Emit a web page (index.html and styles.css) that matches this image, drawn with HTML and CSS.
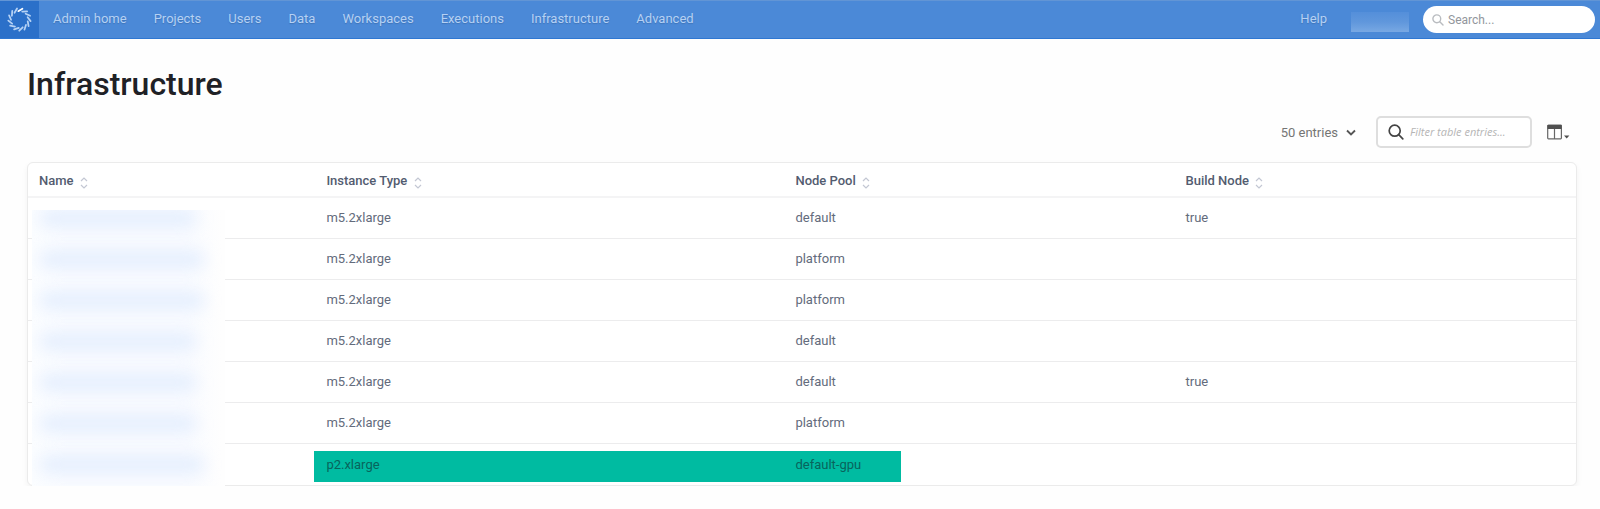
FILE: index.html
```html
<!DOCTYPE html>
<html lang="en">
<head>
<meta charset="utf-8">
<title>Infrastructure</title>
<link rel="stylesheet" href="styles.css">
</head>
<body>
<header class="topbar">
  <a class="logo" href="#" aria-label="Home">
    <svg width="25" height="25" viewBox="-12 -12 24 24" fill="none" stroke="#b5d2f5" stroke-width="1.7" stroke-linecap="round">
      <defs><path id="ray" d="M-1.2 -8 L2.8 -10.4"/></defs>
      <use href="#ray" stroke="#fff"/>
      <use href="#ray" transform="rotate(27.7)"/>
      <use href="#ray" transform="rotate(55.4)"/>
      <use href="#ray" transform="rotate(83.1)"/>
      <use href="#ray" transform="rotate(110.8)"/>
      <use href="#ray" transform="rotate(138.5)"/>
      <use href="#ray" transform="rotate(166.2)"/>
      <use href="#ray" transform="rotate(193.8)"/>
      <use href="#ray" transform="rotate(221.5)"/>
      <use href="#ray" transform="rotate(249.2)"/>
      <use href="#ray" transform="rotate(276.9)"/>
      <use href="#ray" transform="rotate(304.6)"/>
      <use href="#ray" transform="rotate(332.3)"/>
    </svg>
  </a>
  <nav class="nav">
    <a href="#">Admin home</a>
    <a href="#">Projects</a>
    <a href="#">Users</a>
    <a href="#">Data</a>
    <a href="#">Workspaces</a>
    <a href="#">Executions</a>
    <a href="#">Infrastructure</a>
    <a href="#">Advanced</a>
  </nav>
  <div class="tools">
    <a class="help" href="#">Help</a>
    <span class="user"></span>
    <label class="search">
      <svg width="12" height="12" viewBox="0 0 12 12" fill="none" stroke="#b9bcc0" stroke-width="1.4" stroke-linecap="round"><circle cx="4.8" cy="4.8" r="3.9"/><path d="M7.8 7.8 L11 11"/></svg>
      <input type="text" placeholder="Search..." aria-label="Search">
    </label>
  </div>
</header>
<main class="page">
  <h1>Infrastructure</h1>
  <div class="controls">
    <button class="entries" type="button">50 entries
      <svg width="10" height="8" viewBox="0 0 10 8" fill="none" stroke="#555" stroke-width="1.8"><path d="M1 1.5 L5 5.5 L9 1.5"/></svg>
    </button>
    <label class="filter">
      <svg width="16" height="16" viewBox="0 0 16 16" fill="none" stroke="#444" stroke-width="1.7" stroke-linecap="round"><circle cx="6.7" cy="6.7" r="5.5"/><path d="M10.7 10.7 L14.8 14.8"/></svg>
      <input type="text" placeholder="Filter table entries..." aria-label="Filter table entries">
    </label>
    <button class="columns" type="button" aria-label="Columns">
      <svg width="23" height="16" viewBox="0 0 23 16"><path d="M1.5 1.2 H13.6 a.8 .8 0 0 1 .8 .8 V14 a.8 .8 0 0 1 -.8 .8 H1.5 a.8 .8 0 0 1 -.8 -.8 V2 a.8 .8 0 0 1 .8 -.8 z M7.5 4 V15" fill="none" stroke="#666" stroke-width="1.2"/><path d="M.5 1 H14.6 V5 H.5 z M17 11.5 H22.4 L19.7 14.5 z" fill="#505050"/></svg>
    </button>
  </div>
  <div class="card">
    <table>
      <thead>
        <tr>
          <th class="c-name">Name <svg class="sort" viewBox="0 0 8 12"><path d="M1 4 L4 1 L7 4 M1 8 L4 11 L7 8"/></svg></th>
          <th class="c-type">Instance Type <svg class="sort" viewBox="0 0 8 12"><path d="M1 4 L4 1 L7 4 M1 8 L4 11 L7 8"/></svg></th>
          <th class="c-pool">Node Pool <svg class="sort" viewBox="0 0 8 12"><path d="M1 4 L4 1 L7 4 M1 8 L4 11 L7 8"/></svg></th>
          <th>Build Node <svg class="sort" viewBox="0 0 8 12"><path d="M1 4 L4 1 L7 4 M1 8 L4 11 L7 8"/></svg></th>
        </tr>
      </thead>
      <tbody>
        <tr><td></td><td>m5.2xlarge</td><td>default</td><td>true</td></tr>
        <tr><td></td><td>m5.2xlarge</td><td>platform</td><td></td></tr>
        <tr><td></td><td>m5.2xlarge</td><td>platform</td><td></td></tr>
        <tr><td></td><td>m5.2xlarge</td><td>default</td><td></td></tr>
        <tr><td></td><td>m5.2xlarge</td><td>default</td><td>true</td></tr>
        <tr><td></td><td>m5.2xlarge</td><td>platform</td><td></td></tr>
        <tr class="gpu"><td></td><td class="mark">p2.xlarge</td><td class="mark mark-end">default-gpu</td><td></td></tr>
      </tbody>
    </table>
    <div class="mask" aria-hidden="true">
      <i></i><i class="long"></i><i class="long"></i><i></i><i></i><i></i><i class="long"></i>
    </div>
  </div>
</main>
</body>
</html>
```
FILE: styles.css
```css
* { box-sizing: border-box; }
body {
  margin: 0;
  background: #fefefe;
  font-family: Roboto, "Liberation Sans", sans-serif;
  font-size: 13px;
  line-height: 16px;
  color: #636b7c;
}
a { color: inherit; text-decoration: none; }
button { border: 0; padding: 0; background: none; font: inherit; color: inherit; }
input { border: 0; padding: 0; outline: 0; background: none; min-width: 0; flex: 1; }
svg { display: block; flex: none; }

.topbar {
  display: flex;
  height: 39px;
  background: #4b89d7;
  border-top: 1px solid #6295d5;
  border-bottom: 1px solid #2e77d2;
  color: #b5d1f4;
}
.logo {
  display: flex;
  align-items: center;
  justify-content: center;
  width: 39px;
  background: #2b70c9;
}
.nav { display: flex; gap: 27px; padding: 10px 0 0 14px; }
.nav, .help { text-shadow: 0 1px 1px #3f74b8; }
.tools { display: flex; margin-left: auto; padding: 5px 5px 0 0; }
.help { padding-top: 5px; }
.user {
  width: 58px;
  height: 20px;
  margin: 6px 14px 0 24px;
  background: linear-gradient(#548fda, #6097dc 50%, #78a8e3);
}
.search {
  display: flex;
  align-items: center;
  gap: 4px;
  width: 172px;
  height: 27px;
  padding: 0 9px;
  border-radius: 14px;
  background: #fff;
}
.search input { font: 12px/16px Roboto, sans-serif; }
.search input::placeholder { color: #92969c; opacity: 1; }

.page { padding: 25px 23px 0 27px; }
h1 {
  margin: 0;
  font-size: 32px;
  line-height: 40px;
  font-weight: 500;
  color: #1f2126;
}
.controls {
  display: flex;
  justify-content: flex-end;
  align-items: center;
  padding: 12px 7px 14px 0;
}
.entries {
  display: flex;
  align-items: center;
  gap: 8px;
  margin-right: 20px;
  padding-top: 1px;
  color: #757575;
}
.filter {
  display: flex;
  align-items: center;
  gap: 6px;
  width: 156px;
  height: 32px;
  margin-right: 15px;
  padding: 0 10px;
  border: 2px solid #dedede;
  border-radius: 5px;
  background: #fff;
}
.filter input { font: italic 11px/16px "Open Sans", "Noto Sans", sans-serif; }
.filter input::placeholder { color: #b5b5b5; opacity: 1; }

.card {
  position: relative;
  border: 1px solid #ebebeb;
  border-radius: 6px;
  background: #fff;
  box-shadow: 0 3px 6px #0000000d;
}
table { width: 100%; table-layout: fixed; border-collapse: separate; border-spacing: 0; }
th {
  height: 35px;
  padding: 2px 12px 0 11px;
  border-bottom: 2px solid #f4f4f5;
  text-align: left;
  font-weight: 500;
  color: #535c70;
}
th + th { padding-left: 12px; }
.c-name { width: 18.5%; }
.c-type { width: 30.3%; }
.c-pool { width: 25.2%; }
.sort {
  display: inline-block;
  width: 8px;
  height: 12px;
  margin-left: 3px;
  vertical-align: -4px;
  fill: none;
  stroke: #c3c7d3;
  stroke-width: 1.2;
}
td {
  height: 41px;
  padding: 0 12px;
  border-bottom: 1px solid #ececed;
}
.gpu td { border-bottom: 0; }
.mark { position: relative; z-index: 0; color: #08645c; }
.mark::before {
  content: "";
  position: absolute;
  inset: 7px 0 3px;
  z-index: -1;
  background: #00bba1;
}
.mark-end::before { right: auto; width: 118px; }

.mask {
  position: absolute;
  left: 4px;
  top: 47px;
  bottom: -1px;
  width: 193px;
  overflow: hidden;
  background: linear-gradient(90deg, #fbfdff, #f9fbff 20%, #f9fbff 80%, #fefefe 98%);
}
.mask i {
  display: block;
  width: 156px;
  height: 17px;
  margin: 0 0 24px 8px;
  border-radius: 8px;
  background: #e4eefe;
  filter: blur(8px);
}
.mask .long { width: 164px; }
```
